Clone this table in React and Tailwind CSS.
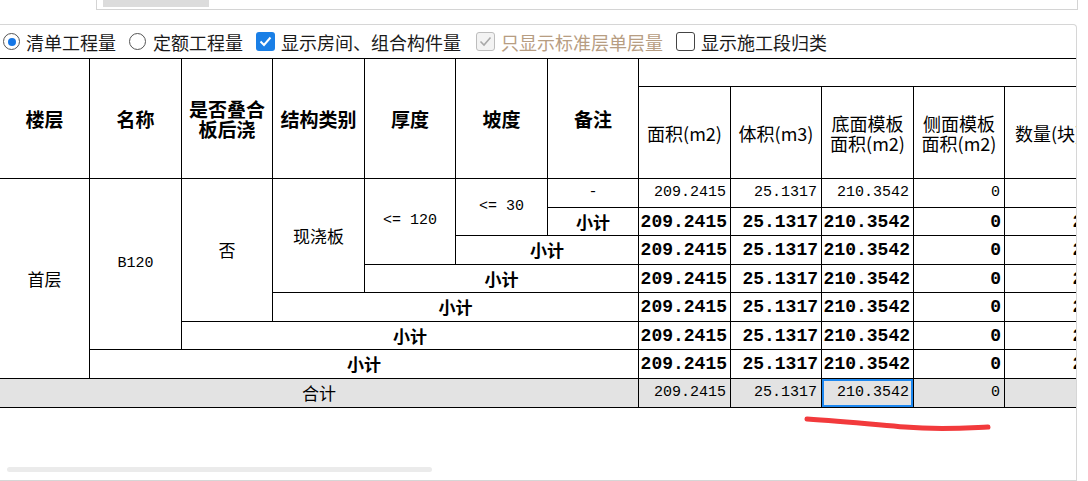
import React from "react";

const cjk = "font-['Noto_Sans_CJK_SC',sans-serif]";
const mono = "font-['Liberation_Mono','Noto_Sans_CJK_SC',monospace]";

const cell = "border border-black p-0";
const head = `${cell} text-center align-middle font-bold text-[19px] leading-[20px] text-black`;
const sub = `${cell} text-center align-middle text-[18px] leading-[20px] text-black`;
const txt = `${cell} text-center align-middle text-[17px] leading-[20px] text-black ${cjk}`;
const monoTxt = `${cell} text-center align-middle text-[15px] text-black ${mono}`;
const num = `${cell} text-right pr-[4px] text-[15px] leading-[20px] text-black ${mono}`;
const numBold = `${cell} text-right pr-[3px] text-[18px] leading-[20px] font-bold text-black ${mono}`;
const subtotal = `${cell} text-center align-middle font-bold text-[17px] leading-[20px] text-black ${cjk}`;

function Radio({ checked }) {
  return (
    <span className="w-[17px] h-[17px] rounded-full border border-[#555] bg-white flex items-center justify-center">
      {checked && <span className="w-[8px] h-[8px] rounded-full bg-[#1677e6]" />}
    </span>
  );
}

function Check({ state }) {
  if (state === "on") {
    return (
      <span className="w-[19px] h-[19px] rounded-[3px] bg-[#1a7fe6] flex items-center justify-center">
        <svg width="13" height="11" viewBox="0 0 13 11">
          <path d="M1.5 5.5 L5 9 L11.5 1.5" fill="none" stroke="#fff" strokeWidth="2" />
        </svg>
      </span>
    );
  }
  if (state === "disabled") {
    return (
      <span className="w-[19px] h-[19px] rounded-[3px] border border-[#bdbdbd] bg-[#f3f3f3] flex items-center justify-center">
        <svg width="13" height="11" viewBox="0 0 13 11">
          <path d="M1.5 5.5 L5 9 L11.5 1.5" fill="none" stroke="#a9a9a9" strokeWidth="1.6" />
        </svg>
      </span>
    );
  }
  return <span className="block w-[19px] h-[19px] rounded-[3px] border border-[#444] bg-white" />;
}

const values = ["209.2415", "25.1317", "210.3542", "0"];

function Nums({ bold }) {
  const c = bold ? numBold : num;
  return (
    <>
      {values.map((v) => (
        <td key={v} className={c}>{v}</td>
      ))}
      <td className={c}>{bold ? "21" : ""}</td>
    </>
  );
}

export default function App() {
  return (
    <div className={`w-[1088px] h-[481px] bg-white relative overflow-hidden ${cjk}`}>
      {/* top tab strip */}
      <div className="h-[24px] pl-[96px] w-[1078px]">
        <div className="h-[10px] border-l border-b border-r border-[#d4d4d4]">
          <div className="ml-[6px] w-[106px] h-[7px] bg-[#dcdcdc]" />
        </div>
      </div>

      <div className="w-[1077px] h-[457px] border-t border-r border-b border-[#d6d6d6] rounded-tr-[4px] flex flex-col">
        {/* options */}
        <div className="h-[33px] flex items-center text-[18px] leading-[20px] text-[#1a1a1a]">
          <span className="ml-[3px]"><Radio checked /></span>
          <span className="ml-[6px]">清单工程量</span>
          <span className="ml-[13px]"><Radio /></span>
          <span className="ml-[7px]">定额工程量</span>
          <span className="ml-[13px]"><Check state="on" /></span>
          <span className="ml-[6px]">显示房间、组合构件量</span>
          <span className="ml-[15px]"><Check state="disabled" /></span>
          <span className="ml-[6px] text-[#b79d82]">只显示标准层单层量</span>
          <span className="ml-[13px]"><Check /></span>
          <span className="ml-[6px]">显示施工段归类</span>
        </div>

        {/* grid */}
        <div className="w-[1076px] overflow-hidden border-t border-black">
          <table className="border-collapse table-fixed -ml-px -mt-px w-[1098px]">
            <colgroup>
              <col className="w-[90px]" />
              <col className="w-[92px]" />
              <col className="w-[91px]" />
              <col className="w-[92px]" />
              <col className="w-[91px]" />
              <col className="w-[92px]" />
              <col className="w-[91px]" />
              <col className="w-[92px]" />
              <col className="w-[91px]" />
              <col className="w-[92px]" />
              <col className="w-[91px]" />
              <col className="w-[93px]" />
            </colgroup>
            <thead>
              <tr className="h-[28px]">
                <th rowSpan={2} className={head}>楼层</th>
                <th rowSpan={2} className={head}>名称</th>
                <th rowSpan={2} className={head}>是否叠合<br />板后浇</th>
                <th rowSpan={2} className={head}>结构类别</th>
                <th rowSpan={2} className={head}>厚度</th>
                <th rowSpan={2} className={head}>坡度</th>
                <th rowSpan={2} className={head}>备注</th>
                <th colSpan={5} className={cell}></th>
              </tr>
              <tr className="h-[92px]">
                <th className={`${sub} font-normal`}>面积(m2)</th>
                <th className={`${sub} font-normal`}>体积(m3)</th>
                <th className={`${sub} font-normal`}>底面模板<br />面积(m2)</th>
                <th className={`${sub} font-normal`}>侧面模板<br />面积(m2)</th>
                <th className={`${sub} font-normal whitespace-nowrap text-left pl-[10px]`}>数量(块)</th>
              </tr>
            </thead>
            <tbody>
              <tr className="h-[29px]">
                <td rowSpan={7} className={txt}>首层</td>
                <td rowSpan={6} className={monoTxt}>B120</td>
                <td rowSpan={5} className={txt}>否</td>
                <td rowSpan={4} className={txt}>现浇板</td>
                <td rowSpan={3} className={monoTxt}>{"<= 120"}</td>
                <td rowSpan={2} className={monoTxt}>{"<= 30"}</td>
                <td className={monoTxt}>-</td>
                <Nums />
              </tr>
              <tr className="h-[28px]">
                <td className={subtotal}>小计</td>
                <Nums bold />
              </tr>
              <tr className="h-[29px]">
                <td colSpan={2} className={subtotal}>小计</td>
                <Nums bold />
              </tr>
              <tr className="h-[28px]">
                <td colSpan={3} className={subtotal}>小计</td>
                <Nums bold />
              </tr>
              <tr className="h-[29px]">
                <td colSpan={4} className={subtotal}>小计</td>
                <Nums bold />
              </tr>
              <tr className="h-[28px]">
                <td colSpan={5} className={subtotal}>小计</td>
                <Nums bold />
              </tr>
              <tr className="h-[29px]">
                <td colSpan={6} className={subtotal}>小计</td>
                <Nums bold />
              </tr>
              <tr className="h-[29px] bg-[#e3e3e3]">
                <td colSpan={7} className={`${txt} text-[16px]`}>合计</td>
                <td className={num}>209.2415</td>
                <td className={num}>25.1317</td>
                <td className={`${num} shadow-[inset_0_0_0_2px_#1e88f0]`}>210.3542</td>
                <td className={num}>0</td>
                <td className={num}></td>
              </tr>
            </tbody>
          </table>
        </div>

        <div className="flex-1" />
        <div className="ml-[7px] mb-[8px] w-[425px] h-[5px] rounded-full bg-[#ebebeb]" />
      </div>

      {/* red hand-drawn mark */}
      <svg className="absolute left-0 top-0 pointer-events-none" width="1088" height="481">
        <path
          d="M807 419 C 840 421, 870 424, 905 427 S 965 428, 988 427"
          fill="none"
          stroke="#f23a3c"
          strokeWidth="5"
          strokeLinecap="round"
        />
      </svg>
    </div>
  );
}
